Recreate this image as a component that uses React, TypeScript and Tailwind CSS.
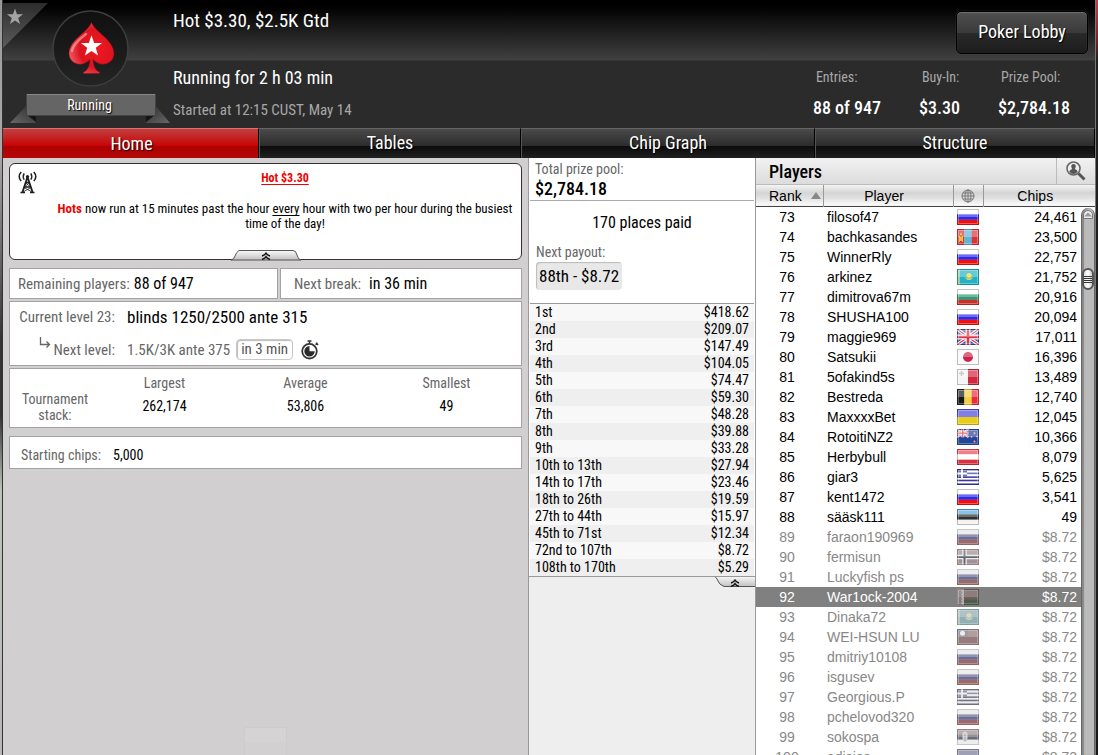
import React from "react";

const NARROW = "font-['Liberation_Sans_Narrow','Roboto_Condensed',Roboto,sans-serif]";

type FlagCode =
  | "ru" | "mn" | "kz" | "bg" | "gb" | "jp" | "mt" | "be" | "ua" | "nz"
  | "at" | "gr" | "ee" | "no" | "by" | "tw" | "rs";

function stripes(colors: string[]) {
  const h = 16 / colors.length;
  return colors.map((c, i) => <rect key={i} x="0" y={i * h} width="22" height={h + 0.2} fill={c} />);
}

function columns(colors: string[]) {
  const w = 22 / colors.length;
  return colors.map((c, i) => <rect key={i} x={i * w} y="0" width={w + 0.2} height="16" fill={c} />);
}

function union() {
  return (
    <>
      <rect width="22" height="16" fill="#2c4fa0" />
      <path d="M0 0L22 16M22 0L0 16" stroke="#fff" strokeWidth="3.4" />
      <path d="M0 0L22 16M22 0L0 16" stroke="#d8354a" strokeWidth="1.2" />
      <path d="M11 0V16M0 8H22" stroke="#fff" strokeWidth="5" />
      <path d="M11 0V16M0 8H22" stroke="#d8354a" strokeWidth="2.6" />
    </>
  );
}

function flagArt(code: FlagCode) {
  switch (code) {
    case "ru":
      return stripes(["#ffffff", "#2b2bf0", "#ee1010"]);
    case "mn":
      return (
        <>
          {columns(["#d8343c", "#5fb4d8", "#d8343c"])}
          <path d="M2 7h1v6H2zM5 7h1v6H5zM3 8h2v4H3zM3 6l1-3 1 3z" fill="#f4c430" />
        </>
      );
    case "kz":
      return (
        <>
          <rect width="22" height="16" fill="#22b2c8" />
          <rect x="1.5" width="1.2" height="16" fill="#d8d070" />
          <circle cx="12" cy="6.6" r="2.6" fill="#f2d640" />
          <path d="M7.5 7q1 4 4.500 4t4.500-4q-1 2.500-4.500 2.500T7.500 7z" fill="#e8d860" />
        </>
      );
    case "bg":
      return stripes(["#ffffff", "#2f9c78", "#c83028"]);
    case "gb":
      return union();
    case "jp":
      return (
        <>
          <rect width="22" height="16" fill="#f8f8f8" />
          <circle cx="11" cy="8" r="5" fill="#cc2448" />
        </>
      );
    case "mt":
      return (
        <>
          {columns(["#f4f4f4", "#d02840"])}
          <path d="M4.500 2v5M2 4.500h5" stroke="#b8b0b0" strokeWidth="1.500" />
        </>
      );
    case "be":
      return columns(["#181818", "#f2d040", "#e82c3c"]);
    case "ua":
      return stripes(["#4a4ad8", "#e8cc18"]);
    case "nz":
      return (
        <>
          <rect width="22" height="16" fill="#22469a" />
          <g transform="scale(.52)">{union()}</g>
          <path d="M17.500 3v2.400M16.300 4.200h2.400M17.500 11.300v2.400M16.300 12.500h2.400M14.500 7v2M13.500 8h2M20 6.500v2M19 7.500h2" stroke="#f08090" strokeWidth="1" />
        </>
      );
    case "at":
      return stripes(["#e84858", "#ffffff", "#d83040"]);
    case "gr":
      return (
        <>
          {stripes(["#3a3a9c", "#ffffff", "#3a3a9c", "#ffffff", "#3a3a9c", "#ffffff", "#3a3a9c", "#ffffff", "#3a3a9c"])}
          <rect width="10" height="8.900" fill="#3a3a9c" />
          <path d="M5 0v8.900M0 4.500h10" stroke="#fff" strokeWidth="1.800" />
        </>
      );
    case "ee":
      return stripes(["#5aa8e0", "#303030", "#f4f4f4"]);
    case "no":
      return (
        <>
          <rect width="22" height="16" fill="#b86068" />
          <path d="M7.500 0v16M0 8h22" stroke="#fff" strokeWidth="4.500" />
          <path d="M7.500 0v16M0 8h22" stroke="#182850" strokeWidth="2" />
        </>
      );
    case "by":
      return (
        <>
          <rect width="22" height="16" fill="#b04850" />
          <rect y="10.500" width="22" height="5.500" fill="#106818" />
          <rect width="7" height="16" fill="#e8d0d0" />
          <path d="M1.500 1l3 3-3 3 3 3-3 3 3 3M4.500 1l-3 3 3 3-3 3 3 3-3 3" fill="none" stroke="#a83848" strokeWidth="1" />
        </>
      );
    case "tw":
      return (
        <>
          <rect width="22" height="16" fill="#b83840" />
          <rect width="11" height="8" fill="#384890" />
          <circle cx="5.500" cy="4.300" r="2.500" fill="#fff" />
        </>
      );
    case "rs":
      return (
        <>
          {stripes(["#c06068", "#283858", "#ffffff"])}
          <path d="M5.500 4q2.500-3 5 0v5q0 3-2.500 4-2.500-1-2.500-4z" fill="#e4d8d0" />
          <path d="M8 4v8M6.500 6.500h3" stroke="#a06060" strokeWidth=".8" />
        </>
      );
  }
}

function Flag({ code, muted }: { code: FlagCode; muted: boolean }) {
  return (
    <svg
      viewBox="0 0 22 16"
      className={muted ? "mx-auto block h-4 w-[22px] opacity-70 brightness-90 saturate-[.35]" : "mx-auto block h-4 w-[22px]"}
      aria-hidden="true"
    >
      {flagArt(code)}
      <rect x="1" y="1" width="20" height="7" fill="#fff" opacity=".3" />
      <rect x="1.500" y="1.500" width="19" height="13" fill="none" stroke="#fff" opacity=".3" />
      <rect x=".5" y=".5" width="21" height="15" fill="none" stroke="#222" opacity=".27" />
    </svg>
  );
}

type Player = [number, string, FlagCode, string];

const PLAYERS: Player[] = [
  [73, "filosof47", "ru", "24,461"],
  [74, "bachkasandes", "mn", "23,500"],
  [75, "WinnerRly", "ru", "22,757"],
  [76, "arkinez", "kz", "21,752"],
  [77, "dimitrova67m", "bg", "20,916"],
  [78, "SHUSHA100", "ru", "20,094"],
  [79, "maggie969", "gb", "17,011"],
  [80, "Satsukii", "jp", "16,396"],
  [81, "5ofakind5s", "mt", "13,489"],
  [82, "Bestreda", "be", "12,740"],
  [83, "MaxxxxBet", "ua", "12,045"],
  [84, "RotoitiNZ2", "nz", "10,366"],
  [85, "Herbybull", "at", "8,079"],
  [86, "giar3", "gr", "5,625"],
  [87, "kent1472", "ru", "3,541"],
  [88, "sääsk111", "ee", "49"],
  [89, "faraon190969", "ru", "$8.72"],
  [90, "fermisun", "no", "$8.72"],
  [91, "Luckyfish ps", "ru", "$8.72"],
  [92, "War1ock-2004", "by", "$8.72"],
  [93, "Dinaka72", "kz", "$8.72"],
  [94, "WEI-HSUN LU", "tw", "$8.72"],
  [95, "dmitriy10108", "ru", "$8.72"],
  [96, "isgusev", "ru", "$8.72"],
  [97, "Georgious.P", "gr", "$8.72"],
  [98, "pchelovod320", "ru", "$8.72"],
  [99, "sokospa", "rs", "$8.72"],
  [100, "adisios", "ua", "$8.72"],
];

const PAYOUTS: [string, string][] = [
  ["1st", "$418.62"],
  ["2nd", "$209.07"],
  ["3rd", "$147.49"],
  ["4th", "$104.05"],
  ["5th", "$74.47"],
  ["6th", "$59.30"],
  ["7th", "$48.28"],
  ["8th", "$39.88"],
  ["9th", "$33.28"],
  ["10th to 13th", "$27.94"],
  ["14th to 17th", "$23.46"],
  ["18th to 26th", "$19.59"],
  ["27th to 44th", "$15.97"],
  ["45th to 71st", "$12.34"],
  ["72nd to 107th", "$8.72"],
  ["108th to 170th", "$5.29"],
];

const STAR = "M0-10L2.350-3.200 9.500-3.100 3.800 1.200 5.900 8.100 0 4 -5.900 8.100 -3.800 1.200 -9.500-3.100 -2.350-3.200z";

function Emblem() {
  return (
    <div className="relative w-[167px] shrink-0">
      <svg viewBox="3 0 167 128" className="block h-32 w-[167px]" aria-hidden="true">
        <defs>
          <linearGradient id="corner" x1="0" y1="0" x2="0" y2="1">
            <stop offset="0" stopColor="#2c2c2c" />
            <stop offset="1" stopColor="#5c5c5c" />
          </linearGradient>
          <linearGradient id="disc" x1="0" y1="0" x2="0" y2="1">
            <stop offset="0" stopColor="#101010" />
            <stop offset="1" stopColor="#242424" />
          </linearGradient>
          <radialGradient id="red" cx=".62" cy=".5" r=".65">
            <stop offset="0" stopColor="#f01820" />
            <stop offset=".6" stopColor="#dc1420" />
            <stop offset="1" stopColor="#f06068" />
          </radialGradient>
          <linearGradient id="foldL" x1="1" y1="0" x2="0" y2="1">
            <stop offset="0" stopColor="#2a2a2a" />
            <stop offset="1" stopColor="#686868" />
          </linearGradient>
          <linearGradient id="foldR" x1="0" y1="0" x2="1" y2="1">
            <stop offset="0" stopColor="#2a2a2a" />
            <stop offset="1" stopColor="#686868" />
          </linearGradient>
        </defs>
        <path d="M3 3H48L3 48z" fill="url(#corner)" />
        <path d={STAR} transform="translate(15 17) scale(.85)" fill="#a4a4a4" />
        <circle cx="90.500" cy="48.500" r="37.500" fill="url(#disc)" stroke="#3e3e3e" strokeWidth="1.500" />
        <path
          d="M91.500 22.500C95 32 114 40 114 53.500C114 61 107 65.500 100.500 64C97.500 63.300 95 61.500 93 59.500C93.500 66 95.500 71 99.500 72V73.500H83.500V72C87.500 71 89.500 66 90 59.500C88 61.500 85.500 63.300 82.500 64C76 65.500 69 61 69 53.500C69 40 88 32 91.500 22.500z"
          fill="url(#red)"
          stroke="#8e0c12"
          strokeWidth=".5"
        />
        <path d="M72 51Q73 44 86 34" fill="none" stroke="#ffb0b0" strokeWidth="2.500" strokeLinecap="round" opacity=".6" />
        <path d={STAR} transform="translate(91.500 46.500) scale(1.120)" fill="#fff" />
        <path d="M27 105L10 123H36V115H27z" fill="url(#foldL)" />
        <path d="M155 105L170 123H146V115H155z" fill="url(#foldR)" />
        <path d="M27 115H36V122zM155 115H146V122z" fill="#151515" />
        <rect x="26.500" y="94.500" width="129" height="21" fill="#656565" stroke="#444" />
        <path d="M27 94.500H155" stroke="#888" />
      </svg>
      <span className="absolute top-[94px] left-0 w-[173px] text-center text-[14px] leading-[22px] text-white [text-shadow:1px_1px_1px_#000]">
        Running
      </span>
    </div>
  );
}

function Chevrons() {
  return (
    <svg viewBox="0 0 10 8" className="block h-2 w-[10px]" aria-hidden="true">
      <path d="M1 4Q4 3 5 1.200Q6 3 9 4M1 7.500Q4 6.500 5 4.700Q6 6.500 9 7.500" fill="none" stroke="#111" strokeWidth="1.400" />
    </svg>
  );
}

function Header() {
  const stats = [
    ["Entries:", "88 of 947"],
    ["Buy-In:", "$3.30"],
    ["Prize Pool:", "$2,784.18"],
  ];
  return (
    <header className="flex bg-[linear-gradient(#000_0,#000_6px,#404040_60px,#2b2b2b_61px)] text-white">
      <Emblem />
      <div className="flex min-w-0 grow flex-col pl-[3px]">
        <div className="flex h-[61px] items-start justify-between">
          <h1 className="pt-[10px] text-[19px] leading-[22px]">Hot $3.30, $2.5K Gtd</h1>
          <button
            type="button"
            className="mt-[11px] mr-[7px] h-[43px] w-[132px] rounded-[5px] border border-black bg-[linear-gradient(#505050,#3a3a3a_50%,#2a2a2a_51%,#1c1c1c)] pb-[2px] text-[18px] shadow-[inset_0_1px_1px_#707070,0_0_1px_#666] [text-shadow:1px_1px_1px_#000]"
          >
            Poker Lobby
          </button>
        </div>
        <div className="flex justify-between">
          <div>
            <p className="pt-[6px] text-[18px] leading-[22px]">Running for 2 h 03 min</p>
            <p className="pt-[11px] text-[15px] leading-5 text-[#a8a8a8]">Started at 12:15 CUST, May 14</p>
          </div>
          <dl className="flex gap-[38px] pt-[6px] pr-[25px]">
            {stats.map(([label, value]) => (
              <div key={label}>
                <dt className="pl-[3px] text-[14px] leading-5 text-[#a8a8a8]">{label}</dt>
                <dd className="pt-[10px] text-[18px] leading-[22px] font-medium">{value}</dd>
              </div>
            ))}
          </dl>
        </div>
      </div>
    </header>
  );
}

function Tabs() {
  const tabs = ["Home", "Tables", "Chip Graph", "Structure"];
  return (
    <nav className="grid h-[31px] grid-cols-[256fr_262fr_294fr_280fr] bg-black">
      {tabs.map((tab, i) => (
        <button
          key={tab}
          type="button"
          className={
            i === 0
              ? "border-t border-r border-t-[#e07070] border-r-black bg-[linear-gradient(#c04040,#c80404_58%,#b00000_60%,#b40808)] pl-[2px] text-[18px] text-white [text-shadow:1px_1px_1px_#000]"
              : "border-t border-r border-l border-t-[#666] border-r-black border-l-[#555] bg-[linear-gradient(#4a4a4a,#2c2c2c_58%,#0c0c0c_60%,#202020)] pb-[2px] text-[18px] text-white [text-shadow:1px_1px_1px_#000]"
          }
        >
          {tab}
        </button>
      ))}
    </nav>
  );
}

function Tower() {
  return (
    <svg viewBox="0 0 20 23" className="h-[23px] w-5 shrink-0" fill="none" stroke="#1c1c1c" aria-hidden="true">
      <path d="M9.500 6L4.500 21M9.500 6L14.500 21" strokeWidth="1.800" />
      <path d="M8 11.500H11M6.500 16H12.500" strokeWidth="1.500" />
      <path d="M8 12L12.500 16M11 12L6.500 16M6 16.500L14 21M13 16.500L5 21" strokeWidth=".8" />
      <path d="M2.500 21.500H7M12 21.500H16.500" strokeWidth="1.600" />
      <circle cx="9.500" cy="5.500" r="1.600" fill="#1c1c1c" stroke="none" />
      <path d="M6.200 2.300Q4.200 5.500 6.200 8.700M12.800 2.300Q14.800 5.500 12.800 8.700" strokeWidth="1.400" />
      <path d="M3.200 1Q-.800 5.500 3.200 10M15.800 1Q19.800 5.500 15.800 10" strokeWidth="1.500" />
    </svg>
  );
}

function Stopwatch() {
  return (
    <svg viewBox="0 0 18 20" className="block h-5 w-[18px]" aria-hidden="true">
      <circle cx="8.500" cy="11.200" r="7.300" fill="#fff" stroke="#333" strokeWidth="1.800" />
      <path d="M8.500 11.200V6A5.200 5.200 0 1 0 13.700 11.200z" fill="#2a2a2a" />
      <path d="M6.500 1H10.500M8.500 1V4M14.500 4.500L16.500 3.200M15.200 2.600L17 5" stroke="#333" strokeWidth="1.500" />
    </svg>
  );
}

function HomePanel() {
  const box = "border border-[#a3a3a3] bg-white";
  const label = "text-[15px] leading-5 text-[#666]";
  return (
    <section className="flex min-h-0 flex-col bg-[#d1cfd0] px-[6px] pt-[5px]">
      <div className="relative flex h-[97px] rounded-md border border-[#333] bg-white pt-[7px] pl-[8px]">
        <Tower />
        <div className="grow pl-[11px] text-center text-[13px] leading-[15px] text-black">
          <p className="text-[12px] leading-[15px]">
            <a href="#hot" className="font-bold text-[#f00000] underline underline-offset-2">Hot $3.30</a>
          </p>
          <p className="pt-[15px]">
            <b className="text-[#f00000]">Hots</b> now run at 15 minutes past the hour <u className="underline-offset-2">every</u> hour with two per hour during the busiest time of the day!
          </p>
        </div>
        <button type="button" aria-label="Collapse message" className="absolute inset-x-0 -bottom-[2px] mx-auto h-[11px] w-[70px]">
          <svg viewBox="0 0 70 11" className="absolute inset-0 h-[11px] w-[70px]" aria-hidden="true">
            <defs>
              <linearGradient id="handle" x1="0" y1="0" x2="0" y2="1">
                <stop offset="0" stopColor="#fafafa" />
                <stop offset="1" stopColor="#c0c0c0" />
              </linearGradient>
            </defs>
            <path d="M0 10Q3 9.500 4 6T8 .5H62Q65 .5 66 5T70 10z" fill="url(#handle)" stroke="#555" />
          </svg>
          <span className="relative flex justify-center"><Chevrons /></span>
        </button>
      </div>

      <div className="mt-2 grid grid-cols-[269fr_242fr] gap-[2px]">
        <div className={`${box} flex h-[31px] items-center gap-1 pl-2`}>
          <span className={label}>Remaining players:</span>
          <span className="text-[16px] text-black">88 of 947</span>
        </div>
        <div className={`${box} flex h-[31px] items-center gap-2 pl-[13px]`}>
          <span className={label}>Next break:</span>
          <span className="text-[16px] text-black">in 36 min</span>
        </div>
      </div>

      <div className={`${box} mt-[2px] h-[65px] pt-[5px]`}>
        <div className="flex items-center">
          <span className={`${label} w-[105px] text-right`}>Current level 23:</span>
          <span className="pl-3 text-[17px] leading-5 text-black">blinds 1250/2500 ante 315</span>
        </div>
        <div className="flex items-center pt-[12px]">
          <span className={`${label} flex w-[105px] items-center justify-end gap-[3px]`}>
            <svg viewBox="0 0 12 14" className="-mt-[3px] h-[14px] w-3 self-start" fill="none" stroke="#666" aria-hidden="true">
              <path d="M1.500 0V7.500H10M7.500 4.500L10.500 7.500L7.500 10.500" strokeWidth="1.300" />
            </svg>
            Next level:
          </span>
          <span className={`${label} pl-3`}>1.5K/3K ante 375</span>
          <span className="ml-[6px] rounded border border-[#c8c8c8] px-[4px] text-[15px] leading-[19px] text-[#555] shadow-[inset_1px_1px_1px_#bbb]">
            in 3 min
          </span>
          <span className="ml-2"><Stopwatch /></span>
        </div>
      </div>

      <div className={`${box} mt-[2px] flex h-[60px] pr-1`}>
        <div className="w-[84px] shrink-0 pt-[22px] pl-[6px] text-center text-[14px] leading-4 text-[#666]">Tournament stack:</div>
        <dl className="grid grow grid-cols-3 text-center text-[14px] leading-5">
          {[["Largest", "262,174"], ["Average", "53,806"], ["Smallest", "49"]].map(([k, v]) => (
            <div key={k} className="pt-1">
              <dt className="text-[#666]">{k}</dt>
              <dd className="pt-[3px] text-black">{v}</dd>
            </div>
          ))}
        </dl>
      </div>

      <div className={`${box} mt-2 flex h-[33px] items-center gap-3 pt-1 pl-[11px] text-[14px] leading-5`}>
        <span className="text-[#666]">Starting chips:</span>
        <span className="text-black">5,000</span>
      </div>

      <div className="mx-auto mt-auto h-7 w-[43px] border border-b-0 border-[#cdcbcc] bg-[linear-gradient(#d5d3d4_50%,#d2d0d1_55%)]" />
    </section>
  );
}

function Payouts() {
  return (
    <section className="min-h-0 border-x border-[#999] bg-[#eee] text-black">
      <div className="border-b border-[#999] bg-white px-px">
        <div className="border-b border-[#aaa] px-[5px] pt-[2px] pb-[2px]">
          <p className="text-[14px] leading-[19px] text-[#666]">Total prize pool:</p>
          <p className="text-[18px] leading-[19px] font-medium">$2,784.18</p>
        </div>
        <p className="pt-[12px] text-center text-[16px] leading-5">170 places paid</p>
        <p className="px-[6px] pt-[9px] text-[14px] leading-5 text-[#666]">Next payout:</p>
        <div className="px-[6px] pb-[13px]">
          <span className="block h-7 w-fit rounded bg-[#e8e8e8] px-[3px] text-[17px] leading-7 shadow-[inset_1px_1px_1px_#bbb]">
            88th - $8.72
          </span>
        </div>
        <table className="w-full border-t border-[#999] text-[14px] leading-[17px]">
          <tbody>
            {PAYOUTS.map(([place, prize]) => (
              <tr key={place} className="odd:bg-[#f8f8f8] even:bg-[#efefef]">
                <td className="p-0 pl-[5px]">{place}</td>
                <td className="p-0 pr-[5px] text-right">{prize}</td>
              </tr>
            ))}
          </tbody>
        </table>
      </div>
      <button type="button" aria-label="Collapse payouts" className="relative ml-auto block h-[11px] w-[41px]">
        <svg viewBox="0 0 41 11" className="absolute inset-0 h-[11px] w-[41px]" aria-hidden="true">
          <path d="M0 -1Q3 .5 4 4T10 9.500H42V-1z" fill="url(#handle)" stroke="#555" />
        </svg>
        <span className="relative flex justify-center"><Chevrons /></span>
      </button>
    </section>
  );
}

function ScrollBar() {
  return (
    <div className="flex w-[14px] shrink-0 flex-col rounded-t-lg border-x border-[#666] bg-[#bbb] shadow-[inset_2px_0_1px_#888]">
      <button type="button" aria-label="Scroll up" className="mx-px mt-[2px] flex h-[9px] items-center justify-center rounded-t-full border border-[#777] bg-[#ececec]">
        <svg viewBox="0 0 8 5" className="h-[5px] w-2" aria-hidden="true">
          <path d="M0 4.500L4 .5L8 4.500z" fill="#999" />
        </svg>
      </button>
      <div className="mt-[49px] flex h-[22px] flex-col items-center justify-center gap-px rounded-full border-2 border-[#555] bg-[linear-gradient(90deg,#ddd,#fff,#ccc)]">
        <i className="h-px w-2 bg-[#333]" />
        <i className="h-px w-2 bg-[#333]" />
        <i className="h-px w-2 bg-[#333]" />
        <i className="h-px w-2 bg-[#333]" />
      </div>
    </div>
  );
}

function PlayersPanel() {
  const th = "h-[21px] border-r border-[#999] p-0 font-normal";
  return (
    <section className="flex min-h-0 flex-col bg-white text-black">
      <div className="flex h-[27px] shrink-0 border-b border-[#bbb] bg-[linear-gradient(#f2f2f2,#dcdcdc)]">
        <h2 className="grow pl-[13px] text-[18px] leading-[27px] font-medium">Players</h2>
        <button type="button" aria-label="Find player" className="flex w-[39px] items-center justify-center border-l border-[#bbb]">
          <svg viewBox="0 0 20 20" className="h-5 w-5" aria-hidden="true">
            <circle cx="7.500" cy="7.500" r="6.500" fill="#eee" stroke="#666" strokeWidth="1.600" />
            <path d="M7.500 3q2.500 0 2.200 2.800-.3 1.800-1 2.200 2.500.8 3 2.500-1.500 2.500-4.200 2.500T3.300 10.500q.5-1.700 3-2.500-.7-.4-1-2.200Q5 3 7.500 3z" fill="#555" />
            <path d="M12.500 12.500L18.500 18.500" stroke="#555" strokeWidth="3" />
          </svg>
        </button>
      </div>
      <div className="relative flex min-h-0 grow overflow-hidden">
        <table className="w-full table-fixed self-start font-['Liberation_Sans',Arial,sans-serif] text-sm leading-5">
          <colgroup>
            <col className="w-[67px]" />
            <col />
            <col className="w-[30px]" />
            <col className="w-[99px]" />
            <col className="w-[13px]" />
          </colgroup>
          <thead>
            <tr className="border-b border-[#444] bg-[linear-gradient(#f4f4f4,#d4d4d4_40%,#dedede_60%,#fafafa)]">
              <th className={th}>
                <span className="flex items-center justify-between pr-[2px] pl-[13px]">
                  Rank
                  <svg viewBox="0 0 10 7" className="h-[7px] w-[10px]" aria-hidden="true">
                    <path d="M0 7L5 0L10 7z" fill="#888" />
                  </svg>
                </span>
              </th>
              <th className={th}>
                <span className="pr-2">Player</span>
              </th>
              <th className={th} aria-label="Country">
                <svg viewBox="0 0 14 14" className="mx-auto block h-[14px] w-[14px]" fill="none" stroke="#777" aria-hidden="true">
                  <circle cx="7" cy="7" r="6" />
                  <ellipse cx="7" cy="7" rx="3" ry="6" />
                  <path d="M7 1V13M1 7H13M2 4H12M2 10H12" />
                </svg>
              </th>
              <th className="h-[21px] p-0 pl-[5px] font-normal">Chips</th>
              <th className="p-0" />
            </tr>
          </thead>
          <tbody>
            {PLAYERS.map(([rank, name, flag, chips]) => {
              const out = rank > 88;
              const selected = rank === 92;
              return (
                <tr key={rank} className={selected ? "bg-[#808080] text-white" : out ? "text-[#888]" : ""}>
                  <td className="h-5 p-0 pr-[5px] text-center">{rank}</td>
                  <td className="p-0 pl-1 whitespace-nowrap">{name}</td>
                  <td className="p-0">
                    <Flag code={flag} muted={out} />
                  </td>
                  <td className="p-0 pr-[5px] text-right">{chips}</td>
                  <td className="bg-white p-0" />
                </tr>
              );
            })}
          </tbody>
        </table>
        <div className="absolute top-[23px] right-0 bottom-0 flex">
          <ScrollBar />
        </div>
      </div>
    </section>
  );
}

export default function App() {
  return (
    <div className={`${NARROW} flex h-screen overflow-hidden bg-[#222]`}>
      <div className="w-[3px] shrink-0 border-r border-[#333] bg-[linear-gradient(#999,#aaa_20%,#333_45%,#333_55%,#bcc4b8_65%,#b8b8b8)]" />
      <div className="flex min-w-0 grow flex-col">
        <Header />
        <Tabs />
        <main className="grid min-h-0 grow grid-cols-[minmax(0,1fr)_228px_339px] grid-rows-[minmax(0,1fr)]">
          <HomePanel />
          <Payouts />
          <PlayersPanel />
        </main>
      </div>
      <div className="w-[3px] shrink-0 border-l border-[#777] bg-[linear-gradient(#c04048,#802028_5%,#202020_8%,#202020_60%,#181818)]" />
    </div>
  );
}
